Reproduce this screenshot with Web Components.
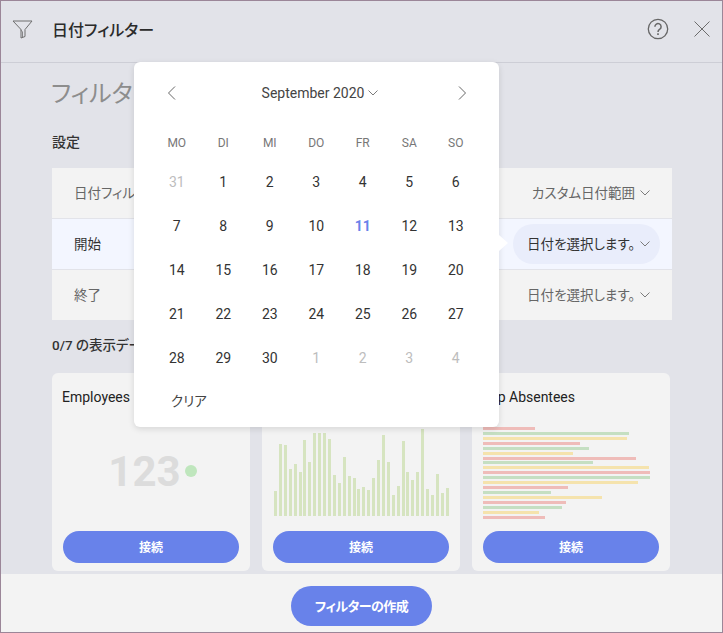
<!DOCTYPE html>
<html lang="ja">
<head>
<meta charset="utf-8">
<title>日付フィルター</title>
<style>
    html, body { margin: 0; padding: 0; }
    body {
        font-family: Roboto, "Noto Sans CJK JP", sans-serif;
        font-feature-settings: "palt";
    }
</style>
</head>
<body>
<date-filter-dialog>
    <filter-row label="日付フィルター" value="カスタム日付範囲"></filter-row>
    <filter-row label="開始" value="日付を選択します。" active></filter-row>
    <filter-row label="終了" value="日付を選択します。"></filter-row>

    <viz-card slot="cards" heading="Employees"><kpi-preview></kpi-preview></viz-card>
    <viz-card slot="cards"><column-preview></column-preview></viz-card>
    <viz-card slot="cards" heading="Top Absentees"><bar-preview></bar-preview></viz-card>

    <calendar-popover slot="popover"></calendar-popover>
</date-filter-dialog>

<script>
const CHEVRON = `<svg width="10" height="6" viewBox="0 0 10 6" fill="none" stroke="#7b7b7b" stroke-width="1"><path d="M.5.5 5 5 9.500.5"/></svg>`;

class DateFilterDialog extends HTMLElement {
    constructor() {
        super();
        this.attachShadow({ mode: 'open' });
        this.shadowRoot.innerHTML = `
            <style>
                :host {
                    display: flex;
                    flex-direction: column;
                    position: relative;
                    box-sizing: border-box;
                    width: 723px;
                    height: 633px;
                    overflow: hidden;
                    border: 1px solid #9b8698;
                    background: #e2e3e9;
                    color: #222;
                }
                header {
                    display: flex;
                    align-items: center;
                    flex: none;
                    box-sizing: border-box;
                    height: 62px;
                    padding: 0 12px 6px 11px;
                    border-bottom: 1px solid #cdced6;
                }
                header .funnel { display: block; margin: 2px 19px 0 0; }
                h1 {
                    flex: 1;
                    margin: 0;
                    font-size: 16px;
                    font-weight: 500;
                    color: #2b2b2b;
                }
                header .help { display: block; margin-right: 25px; }
                main {
                    flex: 1;
                    min-height: 0;
                    padding: 0 51px;
                }
                h2 {
                    margin: 15px 0 0 -1px;
                    font-size: 24px;
                    line-height: 32px;
                    font-weight: 400;
                    color: #8d8d8d;
                }
                h3 {
                    margin: 0;
                    font-size: 14px;
                    line-height: 20px;
                    font-weight: 500;
                    color: #333;
                }
                .settings { margin-top: 22px; }
                .rows { margin-top: 16px; width: 620px; }
                .data { margin-top: 14px; font-size: 13.500px; }
                .cards {
                    display: grid;
                    grid-template-columns: repeat(3, 198px);
                    gap: 12px;
                    margin-top: 18px;
                }
                footer {
                    display: flex;
                    justify-content: center;
                    align-items: center;
                    flex: none;
                    box-sizing: border-box;
                    height: 58px;
                    padding-top: 6px;
                    background: #f3f3f3;
                }
                footer pill-button { width: 141px; height: 40px; font-size: 13px; letter-spacing: -.5px; }
            </style>
            <header>
                <svg class="funnel" width="21" height="19" viewBox="0 0 21 19" fill="none" stroke="#6f6f6f" stroke-width="1">
                    <path d="M1 1h19l-7 8.500V16.500l-4 1.500V9.500z"/>
                    <path d="M8.500 9.500 10.500 12V17" stroke-width=".8"/>
                </svg>
                <h1>日付フィルター</h1>
                <svg class="help" width="22" height="22" viewBox="0 0 22 22" fill="none" stroke="#666" stroke-width="1.300">
                    <circle cx="11" cy="11" r="9.700"/>
                    <path d="M7.900 8.700a3.100 3.100 0 1 1 4.900 2.500c-1.200.8-1.800 1.300-1.800 2.800" stroke-width="1.500"/>
                    <path d="M11 15.300v1.700" stroke-width="1.600"/>
                </svg>
                <svg width="16" height="16" viewBox="0 0 16 16" fill="none" stroke="#6c6c6c" stroke-width="1">
                    <path d="M.5.500l15 15M15.500.500l-15 15"/>
                </svg>
            </header>
            <main>
                <h2>フィルター</h2>
                <h3 class="settings">設定</h3>
                <div class="rows"><slot></slot></div>
                <h3 class="data">0/7 の表示データ</h3>
                <div class="cards"><slot name="cards"></slot></div>
            </main>
            <footer><pill-button>フィルターの作成</pill-button></footer>
            <slot name="popover"></slot>
        `;
    }
}

class FilterRow extends HTMLElement {
    constructor() {
        super();
        this.attachShadow({ mode: 'open' });
        this.shadowRoot.innerHTML = `
            <style>
                :host {
                    display: flex;
                    align-items: center;
                    justify-content: space-between;
                    box-sizing: border-box;
                    height: 51px;
                    padding: 0 12px 0 22px;
                    background: #f3f3f3;
                    border-bottom: 1px solid #e2e3e9;
                    font-size: 13.500px;
                    color: #666;
                }
                :host(:last-child) { height: 50px; border-bottom: 0; }
                :host([active]) { background: #f3f6ff; color: #333; }
                .label, .text { padding-bottom: 2px; }
                .value {
                    display: flex;
                    align-items: center;
                    justify-content: flex-end;
                    gap: 5px;
                    box-sizing: border-box;
                    width: 147px;
                    height: 40px;
                    padding: 0 10px 0 0;
                    border-radius: 20px;
                }
                :host([active]) .value { background: #e9edfb; }
            </style>
            <span class="label"></span>
            <span class="value"><span class="text"></span>${CHEVRON}</span>
        `;
        this.shadowRoot.querySelector('.label').textContent = this.getAttribute('label');
        this.shadowRoot.querySelector('.text').textContent = this.getAttribute('value');
    }
}

class PillButton extends HTMLElement {
    constructor() {
        super();
        this.attachShadow({ mode: 'open' });
        this.shadowRoot.innerHTML = `
            <style>
                :host {
                    display: flex;
                    align-items: center;
                    justify-content: center;
                    box-sizing: border-box;
                    height: 32px;
                    padding-bottom: 2px;
                    border-radius: 20px;
                    background: #6882ea;
                    color: #fff;
                    font-size: 12px;
                    font-weight: 700;
                }
            </style>
            <slot></slot>
        `;
    }
}

class VizCard extends HTMLElement {
    constructor() {
        super();
        this.attachShadow({ mode: 'open' });
        this.shadowRoot.innerHTML = `
            <style>
                :host {
                    display: flex;
                    flex-direction: column;
                    box-sizing: border-box;
                    height: 198px;
                    padding: 0 11px 8px;
                    border-radius: 6px;
                    background: #f3f3f3;
                }
                .title {
                    flex: none;
                    height: 48px;
                    padding-top: 15px;
                    box-sizing: border-box;
                    font-size: 14px;
                    line-height: 18px;
                    color: #222;
                    margin-left: -1px;
                }
                .body { flex: 1; min-height: 0; }
            </style>
            <div class="title"></div>
            <div class="body"><slot></slot></div>
            <pill-button>接続</pill-button>
        `;
        this.shadowRoot.querySelector('.title').textContent = this.getAttribute('heading') || '';
    }
}

class KpiPreview extends HTMLElement {
    constructor() {
        super();
        this.attachShadow({ mode: 'open' });
        this.shadowRoot.innerHTML = `
            <style>
                :host {
                    display: flex;
                    align-items: center;
                    justify-content: center;
                    gap: 4px;
                    height: 100%;
                    font-size: 42px;
                    font-weight: 700;
                    color: #dcdcdc;
                    padding-left: 3px;
                    padding-bottom: 10px;
                    box-sizing: border-box;
                }
                i { width: 12px; height: 12px; border-radius: 50%; background: #bfe6bd; }
            </style>
            <span>123</span><i></i>
        `;
    }
}

class ColumnPreview extends HTMLElement {
    constructor() {
        super();
        this.attachShadow({ mode: 'open' });
        const heights = [25, 72, 71, 47, 52, 44, 76, 54, 83, 83, 83, 77, 41, 33, 59, 40, 38, 27, 29, 26, 38, 56, 81, 54, 21, 30, 75, 44, 36, 44, 87, 27, 21, 42, 23, 28];
        const bars = heights.map(h => `<i style="height:${h}px"></i>`).join('');
        this.shadowRoot.innerHTML = `
            <style>
                :host {
                    display: flex;
                    align-items: flex-end;
                    justify-content: space-between;
                    box-sizing: border-box;
                    height: 100%;
                    padding: 0 0 15px 1px;
                }
                i { flex: none; width: 3px; background: #d6e4c0; }
            </style>
            ${bars}
        `;
    }
}

class BarPreview extends HTMLElement {
    constructor() {
        super();
        this.attachShadow({ mode: 'open' });
        const widths = [52, 146, 144, 97, 106, 90, 153, 110, 166, 167, 167, 155, 85, 68, 119, 83, 79, 56, 62];
        const colors = ['#efbcb9', '#c5dfc2', '#f5e3ad'];
        const bars = widths.map((w, n) => `<i style="width:${w}px;background:${colors[n % 3]}"></i>`).join('');
        this.shadowRoot.innerHTML = `
            <style>
                :host {
                    display: flex;
                    flex-direction: column;
                    gap: 1.930px;
                    box-sizing: border-box;
                    height: 100%;
                    padding-top: 6px;
                }
                i { display: block; flex: none; height: 3px; }
            </style>
            ${bars}
        `;
    }
}

class CalendarPopover extends HTMLElement {
    constructor() {
        super();
        this.attachShadow({ mode: 'open' });
        const headers = ['MO', 'DI', 'MI', 'DO', 'FR', 'SA', 'SO'].map(d => `<span class="dow">${d}</span>`).join('');
        let days = '<span class="off">31</span>';
        for (let d = 1; d <= 30; d++) {
            days += `<span${d === 11 ? ' class="today"' : ''}>${d}</span>`;
        }
        for (let d = 1; d <= 4; d++) {
            days += `<span class="off">${d}</span>`;
        }
        this.shadowRoot.innerHTML = `
            <style>
                :host {
                    display: block;
                    position: absolute;
                    left: 133px;
                    top: 61px;
                    box-sizing: border-box;
                    width: 365px;
                    height: 365px;
                    padding: 0 20px;
                    border-radius: 6px;
                    background: #fff;
                    box-shadow: 0 2px 6px rgba(0, 0, 0, .12);
                    color: #333;
                }
                .pointer {
                    position: absolute;
                    left: 365px;
                    top: 173px;
                    width: 0;
                    height: 0;
                    border-style: solid;
                    border-width: 8px 0 8px 9px;
                    border-color: transparent transparent transparent #fff;
                }
                .month {
                    display: flex;
                    align-items: center;
                    justify-content: space-between;
                    height: 62px;
                    padding: 0 12px 0 13px;
                    font-size: 14px;
                    color: #444;
                }
                .month div { display: flex; align-items: center; gap: 4px; margin-left: 6px; }
                .grid {
                    display: grid;
                    grid-template-columns: repeat(7, 46.500px);
                    grid-template-rows: 39px repeat(5, 44px);
                    margin-top: -3px;
                    margin-left: -0.500px;
                    text-align: center;
                    font-size: 14px;
                    line-height: 44px;
                }
                .dow { font-size: 12px; color: #777; line-height: 44px; }
                .off { color: #bdbdbd; }
                .today { color: #6882ea; font-weight: 700; }
                .clear {
                    margin: -1px 0 0 17px;
                    font-size: 13.500px;
                    line-height: 44px;
                    color: #444;
                }
            </style>
            <div class="pointer"></div>
            <div class="month">
                <svg width="9" height="14" viewBox="0 0 9 14" fill="none" stroke="#666"><path d="M8 .5 1.500 7 8 13.500"/></svg>
                <div>September 2020 ${CHEVRON}</div>
                <svg width="9" height="14" viewBox="0 0 9 14" fill="none" stroke="#666"><path d="M1 .5 7.500 7 1 13.500"/></svg>
            </div>
            <div class="grid">${headers}${days}</div>
            <div class="clear">クリア</div>
        `;
    }
}

customElements.define('filter-row', FilterRow);
customElements.define('pill-button', PillButton);
customElements.define('viz-card', VizCard);
customElements.define('kpi-preview', KpiPreview);
customElements.define('column-preview', ColumnPreview);
customElements.define('bar-preview', BarPreview);
customElements.define('calendar-popover', CalendarPopover);
customElements.define('date-filter-dialog', DateFilterDialog);
</script>
</body>
</html>
